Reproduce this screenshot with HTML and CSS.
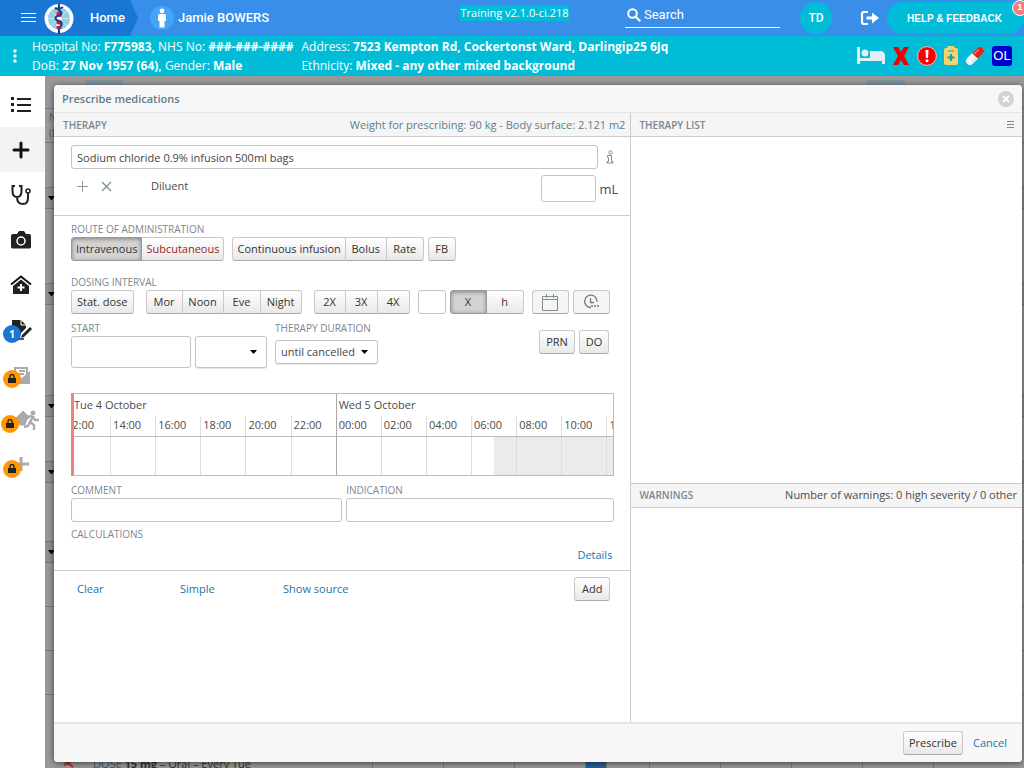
FILE: index.html
```html
<!DOCTYPE html>
<html lang="en">
<head>
    <meta charset="UTF-8">
    <meta name="viewport" content="width=device-width, initial-scale=1.0">
    <title>Prescribe medications</title>
    <link rel="stylesheet" href="styles.css">
</head>
<body>
    <!-- Top bar -->
    <header class="topbar">
        <div class="crumb-home">
            <button class="icon-btn" aria-label="Menu">
                <svg width="15" height="10" viewBox="0 0 15 10" stroke="#fff"><path d="M0 .5h15M0 4.500h15M0 8.500h15"/></svg>
            </button>
            <svg class="logo" width="30" height="32" viewBox="0 0 30 32">
                <circle cx="15" cy="16.500" r="14.500" fill="#fff"/>
                <circle cx="15" cy="16.500" r="11" fill="#8fd0e4"/>
                <path d="M15 5.500v22M4 16.500h22M7 9l16 15M23 9L7 24" stroke="#c4e8f2" fill="none"/>
                <path d="M12.500 10h5v16h-5z" fill="#fff"/>
                <path d="M12.500 10h5v5l-5-1zM12.500 18l5 1v4l-5-1zM12.500 24h5v3h-5z" fill="#d5202f"/>
                <path d="M15 2v6M11 6q4 2 8-1M14 8c5 2 4 5 0 6s-3 4 1 5 3 4 1 6M15 26v6" stroke="#1d3f87" stroke-width="2" fill="none"/>
            </svg>
            <a class="home" href="#">Home</a>
        </div>
        <a class="crumb-patient" href="#">
            <svg width="24" height="24" viewBox="0 0 24 24">
                <circle cx="12" cy="12" r="12" fill="#42a5f5"/>
                <circle cx="12" cy="5" r="2.400" fill="#fff"/>
                <path d="M9.500 8h5q1.500 0 1.500 1.500V15h-1.500v6.500H9.500V15H8V9.500Q8 8 9.500 8z" fill="#fff"/>
            </svg>
            Jamie BOWERS
        </a>
        <div class="version"><span>Training v2.1.0-ci.218</span></div>
        <label class="search">
            <svg width="14" height="14" viewBox="0 0 14 14" fill="none" stroke="#fff" stroke-width="2"><circle cx="5.500" cy="5.500" r="4.300"/><path d="M8.700 8.700l4.600 4.600"/></svg>
            <input type="search" placeholder="Search" aria-label="Search">
        </label>
        <button class="avatar">TD</button>
        <button class="icon-btn logout" aria-label="Log out">
            <svg width="20" height="16" viewBox="0 0 20 16" fill="none" stroke="#fff" stroke-width="2.200"><path d="M8 2H4Q2 2 2 4v8q0 2 2 2h4"/><path d="M6.500 6.500H12V2.500L19 8l-7 5.500v-4H6.500z" fill="#fff" stroke="none"/></svg>
        </button>
        <button class="help">HELP &amp; FEEDBACK<span class="help-count">1</span></button>
    </header>

    <!-- Patient banner -->
    <section class="banner">
        <button class="icon-btn more" aria-label="More">
            <svg width="4" height="14" viewBox="0 0 4 14" fill="#fff"><circle cx="2" cy="2" r="1.700"/><circle cx="2" cy="7" r="1.700"/><circle cx="2" cy="12" r="1.700"/></svg>
        </button>
        <div class="patient">
            <p>Hospital No: <b>F775983,</b> NHS No: <b>###-###-####</b></p>
            <p>DoB: <b>27 Nov 1957 (64),</b> Gender: <b>Male</b></p>
        </div>
        <div class="patient">
            <p>Address: <b>7523 Kempton Rd, Cockertonst Ward, Darlingip25 6Jq</b></p>
            <p>Ethnicity: <b>Mixed - any other mixed background</b></p>
        </div>
        <div class="alerts">
            <svg width="28" height="18" viewBox="0 0 28 18" fill="#e3eff5"><path d="M0 0h3v11h10V4h10q5 0 5 5v8h-3v-3H3v3H0z"/><circle cx="8" cy="6" r="3.500"/></svg>
            <svg width="18" height="20" viewBox="0 0 18 20"><path d="M1 1h5l3 5 3-5h5l-5 9 5 9h-5l-3-5-3 5H1l5-9z" fill="#f00000"/></svg>
            <svg width="20" height="20" viewBox="0 0 20 20"><circle cx="10" cy="10" r="9.400" fill="#f00" stroke="#fbb" /><path d="M8.500 4h3l-.5 8H9z" fill="#fff"/><circle cx="10" cy="14.800" r="1.500" fill="#fff"/></svg>
            <svg width="14" height="20" viewBox="0 0 14 20"><rect y="2" width="14" height="17" rx="2" fill="#fad165"/><rect x="3.500" y="0" width="7" height="4" rx="1" fill="#fad165"/><path d="M4 5h6" stroke="#07a2bd"/><path d="M7 8v7M3.500 11.500h7" stroke="#07a2bd" stroke-width="2"/></svg>
            <svg width="20" height="20" viewBox="0 0 20 20"><g transform="rotate(45 10 10)"><rect x="6" y="-1" width="8" height="22" rx="4" fill="#f3f5f6"/><path d="M6 10V3a4 4 0 0 1 8 0v7z" fill="#e0281f"/><path d="M8 3v6" stroke="#ff9a8e"/><path d="M12.500 11v6" stroke="#ccd4d8"/></g></svg>
            <span class="ol">OL</span>
        </div>
    </section>

    <div class="workspace">
        <!-- Side menu -->
        <nav class="sidebar">
            <a href="#" aria-label="Summary">
                <svg width="20" height="16" viewBox="0 0 20 16" fill="#212121"><path d="M0 0h3v3H0zM0 6h3v3H0zM0 12h3v3H0zM6 1h14v2H6zM6 7h14v2H6zM6 13h14v2H6z"/></svg>
            </a>
            <a href="#" class="active" aria-label="Add">
                <svg width="18" height="18" viewBox="0 0 18 18" stroke="#111" stroke-width="3"><path d="M9 2v14M2 9h14" stroke-linecap="round"/></svg>
            </a>
            <a href="#" aria-label="Observations">
                <svg width="20" height="20" viewBox="0 0 20 20" fill="none" stroke="#212121" stroke-width="2"><path d="M4 1H1.500v5q0 6 4.500 6t4.500-6V1H8M6 12q0 7 6 7 5 0 5-6V8"/><circle cx="17" cy="6" r="2" stroke-width="1.600"/></svg>
            </a>
            <a href="#" aria-label="Photos">
                <svg width="20" height="18" viewBox="0 0 20 18"><path d="M2 3h4l2-3h5l2 3h3q2 0 2 2v11q0 1.500-2 1.500H2Q0 17.500 0 16V5q0-2 2-2z" fill="#212121"/><circle cx="10" cy="10" r="4" fill="none" stroke="#fff" stroke-width="1.500"/></svg>
            </a>
            <a href="#" aria-label="Ward">
                <svg width="22" height="20" viewBox="0 0 22 20"><path d="M1 9.500L11 1.500l10 8" fill="none" stroke="#111" stroke-width="2"/><path d="M3 11l8-6.500 8 6.500v8H3z" fill="#212121"/><path d="M11 9v7M7.500 12.500h7" stroke="#fff" stroke-width="2"/></svg>
            </a>
            <a href="#" aria-label="Notes">
                <svg width="24" height="20" viewBox="0 0 24 20"><path d="M3 0h9l5 5v3l-6 6v4H3z" fill="#212121"/><path d="M12 0v5h5" stroke="#fff" fill="none"/><path d="M13 15l8-8 2 2-8 8-3 1z" fill="#212121"/><path d="M9 19h6" stroke="#212121" stroke-width="1.500"/></svg>
                <span class="badge blue">1</span>
            </a>
            <a href="#" aria-label="Letters, locked">
                <svg width="20" height="19" viewBox="0 0 20 19" fill="none" stroke="#aaa" stroke-width="2"><path d="M4 13V3h12v9M8 6h6M8 9h5"/><path d="M1 9v9h17V8l-8 7z" fill="#aaa"/></svg>
                <span class="badge"><svg width="8" height="10" viewBox="0 0 8 10"><path d="M0 4h8v5H0z" fill="#222"/><path d="M2 4V2.500a2 2 0 0 1 4 0V4" fill="none" stroke="#222" stroke-width="1.300"/></svg></span>
            </a>
            <a href="#" aria-label="Discharge, locked">
                <svg class="wide" width="28" height="20" viewBox="0 0 28 20" fill="none" stroke="#aaa"><path d="M5 8l7-7 5 5-3 9H9z" fill="#aaa"/><circle cx="22" cy="3" r="2" fill="#aaa"/><path d="M15 9l4-3 3 1-3 5 4 3v5M19 12l-2 4-4 1M22 7l2 3h4" stroke-width="2.400"/></svg>
                <span class="badge left"><svg width="8" height="10" viewBox="0 0 8 10"><path d="M0 4h8v5H0z" fill="#222"/><path d="M2 4V2.500a2 2 0 0 1 4 0V4" fill="none" stroke="#222" stroke-width="1.300"/></svg></span>
            </a>
            <a href="#" aria-label="Other, locked">
                <svg width="18" height="18" viewBox="0 0 18 18" stroke="#aaa" stroke-width="3"><path d="M9 1v14M2 8h15"/></svg>
                <span class="badge"><svg width="8" height="10" viewBox="0 0 8 10"><path d="M0 4h8v5H0z" fill="#222"/><path d="M2 4V2.500a2 2 0 0 1 4 0V4" fill="none" stroke="#222" stroke-width="1.300"/></svg></span>
            </a>
        </nav>

        <main class="chart">
            <!-- Dimmed medication chart -->
            <div class="chart-tools"><span></span><span></span></div>
            <div class="chart-head">N<br>(N</div>
            <div class="chart-gap"></div>
            <div class="chart-band"><svg width="7" height="5" viewBox="0 0 7 5"><path d="M0 0h7L3.500 4.500z"/></svg></div>
            <div class="chart-gap tall"></div>
            <div class="chart-band"><svg width="7" height="5" viewBox="0 0 7 5"><path d="M0 0h7L3.500 4.500z"/></svg></div>
            <div class="chart-gap large"></div>
            <div class="chart-band"><svg width="7" height="5" viewBox="0 0 7 5"><path d="M0 0h7L3.500 4.500z"/></svg></div>
            <div class="chart-gap"></div>
            <div class="chart-band"><svg width="7" height="5" viewBox="0 0 7 5"><path d="M0 0h7L3.500 4.500z"/></svg></div>
            <div class="chart-gap medium"></div>
            <div class="chart-band"><svg width="7" height="5" viewBox="0 0 7 5"><path d="M0 0h7L3.500 4.500z"/></svg></div>
            <div class="chart-gap line"></div>
            <div class="chart-gap line"></div>
            <div class="chart-gap line"></div>
            <div class="chart-row">
                <div class="dose">
                    <svg width="16" height="12" viewBox="0 0 16 12" fill="none" stroke="#a33" stroke-width="2"><path d="M1 2l6 6 8-7M3 9l4-2 5 4"/></svg>
                    <p><span>DOSE</span> <b>15 mg</b> – Oral – Every Tue</p>
                </div>
                <i></i><i></i><i></i><i class="given"></i><i class="short"></i><i></i><i></i><i></i><i></i><i></i>
            </div>

            <!-- Prescribe dialog -->
            <div class="dialog" role="dialog" aria-labelledby="dialogTitle">
                <div class="dialog-title">
                    <h1 id="dialogTitle">Prescribe medications</h1>
                    <button class="close" aria-label="Close">
                        <svg width="16" height="16" viewBox="0 0 16 16"><circle cx="8" cy="8" r="8" fill="#d3d3d3"/><path d="M5 5l6 6M11 5l-6 6" stroke="#fff" stroke-width="1.800"/></svg>
                    </button>
                </div>
                <div class="dialog-body">
                    <div class="therapy">
                        <div class="panel-head">
                            <h2>THERAPY</h2>
                            <span>Weight for prescribing: 90 kg - Body surface: 2.121 m2</span>
                        </div>
                        <form>
                            <div class="medicine">
                                <div class="row medicine-name">
                                    <input type="text" value="Sodium chloride 0.9% infusion 500ml bags" aria-label="Medication">
                                    <button type="button" class="plain" aria-label="Information">
                                        <svg width="8" height="14" viewBox="0 0 8 14" fill="none" stroke="#7d8f97"><circle cx="4.500" cy="2.500" r="1.700"/><path d="M1.500 5.500h4v6h1.500v1.500H1v-1.500h1.500v-4h-1z"/></svg>
                                    </button>
                                </div>
                                <div class="row diluent">
                                    <button type="button" class="plain" aria-label="Add ingredient"><svg width="11" height="11" viewBox="0 0 11 11" stroke="#8c9ba1"><path d="M5.500 0v11M0 5.500h11"/></svg></button>
                                    <button type="button" class="plain" aria-label="Remove ingredient"><svg width="11" height="11" viewBox="0 0 11 11" stroke="#7d8f97" stroke-width="1.300"><path d="M1 1l9 9M10 1l-9 9"/></svg></button>
                                    <label for="volume">Diluent</label>
                                    <input type="text" id="volume">
                                    <span class="unit">mL</span>
                                </div>
                            </div>

                            <div class="details">
                                <div class="caption">ROUTE OF ADMINISTRATION</div>
                                <div class="row route">
                                    <div class="group"><button type="button" class="on">Intravenous</button><button type="button" class="red">Subcutaneous</button></div>
                                    <div class="group gap-8"><button type="button">Continuous infusion</button><button type="button" class="w-41">Bolus</button><button type="button" class="w-37">Rate</button></div>
                                    <div class="group gap-4"><button type="button" class="w-28">FB</button></div>
                                </div>

                                <div class="caption interval">DOSING INTERVAL</div>
                                <div class="row">
                                    <div class="group"><button type="button">Stat. dose</button></div>
                                    <div class="group gap-12"><button type="button" class="w-37">Mor</button><button type="button" class="w-41">Noon</button><button type="button" class="w-37">Eve</button><button type="button" class="w-41">Night</button></div>
                                    <div class="group gap-12"><button type="button" class="w-32">2X</button><button type="button" class="w-32">3X</button><button type="button" class="w-32">4X</button></div>
                                    <input type="text" class="times w-28 gap-8" aria-label="Times">
                                    <div class="group gap-4"><button type="button" class="on w-37">X</button><button type="button" class="w-37">h</button></div>
                                    <button type="button" class="tool gap-8" aria-label="Calendar">
                                        <svg width="16" height="17" viewBox="0 0 16 17" fill="none" stroke="#7d8f97"><path d="M.5 2.500h15v14H.5zM.5 5.500h15M4.500 0v4M11.500 0v4"/></svg>
                                    </button>
                                    <button type="button" class="tool gap-4" aria-label="Time">
                                        <svg width="16" height="16" viewBox="0 0 16 16" fill="none" stroke="#777" stroke-width="1.300"><path d="M8 13.500A6.200 6.200 0 1 1 14 8M7.500 4v4.500H11"/><path d="M8 12h2M11 12h2M14 12h2" stroke-width="1.600"/></svg>
                                    </button>
                                </div>

                                <div class="row timing">
                                    <div>
                                        <label class="caption" for="startDate">START</label>
                                        <div class="row start">
                                            <input type="text" id="startDate">
                                            <select aria-label="Start time"><option></option></select>
                                        </div>
                                    </div>
                                    <div class="duration">
                                        <label class="caption" for="duration">THERAPY DURATION</label>
                                        <select id="duration"><option>until cancelled</option></select>
                                    </div>
                                    <div class="flags">
                                        <button type="button">PRN</button>
                                        <button type="button">DO</button>
                                    </div>
                                </div>

                                <div class="timeline">
                                    <div class="days"><span>Tue 4 October</span><span>Wed 5 October</span></div>
                                    <div class="hours"><span class="cut">12:00</span><span>14:00</span><span>16:00</span><span>18:00</span><span>20:00</span><span>22:00</span><span>00:00</span><span>02:00</span><span>04:00</span><span>06:00</span><span>08:00</span><span>10:00</span><span>12:00</span></div>
                                    <div class="slots"><i></i><i></i><i></i><i></i><i></i><i></i><i></i><i></i><i></i><i class="half"></i><i class="shade"></i><i class="shade"></i><i class="shade"></i></div>
                                </div>

                                <div class="notes">
                                    <div><label class="caption" for="comment">COMMENT</label><input type="text" id="comment"></div>
                                    <div><label class="caption" for="indication">INDICATION</label><input type="text" id="indication"></div>
                                </div>
                                <div class="caption">CALCULATIONS</div>
                                <div class="more-link"><a href="#">Details</a></div>
                            </div>

                            <div class="row actions">
                                <a href="#">Clear</a>
                                <a href="#">Simple</a>
                                <a href="#">Show source</a>
                                <button type="button">Add</button>
                            </div>
                        </form>
                    </div>

                    <div class="side">
                        <div class="side-panel list">
                            <div class="panel-head">
                                <h2>THERAPY LIST</h2>
                                <button class="plain" aria-label="List options"><svg width="7" height="8" viewBox="0 0 7 8" stroke="#888"><path d="M0 .5h7M0 3.500h7M0 6.500h7"/></svg></button>
                            </div>
                        </div>
                        <div class="side-panel warnings">
                            <div class="panel-head">
                                <h2>WARNINGS</h2>
                                <span>Number of warnings: 0 high severity / 0 other</span>
                            </div>
                        </div>
                    </div>
                </div>
                <div class="dialog-foot">
                    <button>Prescribe</button>
                    <a href="#">Cancel</a>
                </div>
            </div>
        </main>
    </div>
</body>
</html>
```

FILE: styles.css
```css
* { box-sizing: border-box; }
body { margin: 0; height: 100vh; overflow: hidden; display: flex; flex-direction: column; font-family: "Open Sans", "Noto Sans", sans-serif; font-size: 11px; line-height: 16px; color: #444; }
h1, h2, p { margin: 0; }
a { color: #1b74a8; text-decoration: none; }
button, input, select { font: inherit; color: #333; margin: 0; }
button { cursor: pointer; }
svg { display: block; flex: none; }
.icon-btn, .plain { background: none; border: 0; padding: 0; flex: none; }
.row { display: flex; align-items: center; }

/* Top bar */
.topbar { flex: none; display: flex; align-items: center; height: 36px; background: #388ee8; color: white; font-family: Roboto, sans-serif; }
.topbar a { color: white; font-size: 13px; font-weight: 500; }
.crumb-home { display: flex; align-items: center; height: 100%; width: 138px; padding-left: 21px; background: #1976d2; clip-path: polygon(0 0, 130px 0, 100% 50%, 130px 100%, 0 100%); }
.logo { margin-left: 8px; }
.home { margin-left: 16px; }
.crumb-patient { display: flex; align-items: center; gap: 4px; margin-left: 12px; width: 200px; }
.version { flex: 1; text-align: center; align-self: flex-start; padding: 5px 0 0 54px; font-family: "Open Sans", sans-serif; font-size: 11px; white-space: nowrap; }
.version span { background: #00bcd9; display: inline-block; }
.search { display: flex; align-items: center; gap: 3px; width: 155px; height: 24px; margin: 0 20px 4px 0; padding: 0 2px 2px; border-bottom: 1px solid white; }
.search input { width: 100%; border: 0; padding: 0; background: none; color: white; font-size: 13px; outline: none; }
.search input::placeholder { color: white; }
.avatar { width: 32px; height: 32px; border: 0; padding: 0; border-radius: 50%; background: #00bcd9; color: white; font-size: 12px; font-weight: 500; }
.logout { margin: 0 7px 0 28px; }
.help { position: relative; width: 137px; height: 32px; border: 0; padding: 0 2px 0 0; border-radius: 16px; background: #00bcd9; color: white; font: bold 10px "Liberation Sans", sans-serif; }
.help-count { position: absolute; top: -2px; right: -4px; width: 16px; height: 16px; border: 1px solid white; border-radius: 50%; background: #f08080; font-size: 9px; line-height: 13px; }

/* Patient banner */
.banner { flex: none; display: flex; align-items: center; height: 40px; padding: 0 12px 0 13px; background: #00bcd7; color: white; font-size: 12px; line-height: 19px; white-space: nowrap; }
.more { margin-right: 15px; }
.patient { margin-right: 8px; }
.banner b { font-weight: 700; }
.alerts { display: flex; align-items: center; gap: 7px; margin-left: auto; }
.ol { width: 20px; height: 20px; border-radius: 3px; background: #0000cd; text-align: center; font: 13px/20px "Liberation Sans", sans-serif; }

/* Side menu */
.workspace { flex: 1; min-height: 0; display: flex; }
.sidebar { flex: none; width: 45px; padding-top: 6px; background: white; }
.sidebar a { position: relative; display: flex; align-items: center; justify-content: center; height: 45px; padding-right: 3px; }
.sidebar .active { background: #f3f3f3; }
.badge { position: absolute; left: 3px; top: 18px; width: 18px; height: 18px; border-radius: 50%; display: flex; align-items: center; justify-content: center; background: #ff9800; }
.badge.blue { background: #1976d2; color: white; font-weight: bold; font-size: 10px; }
.badge.left { left: 1px; }
.sidebar .wide { margin-left: 8px; }

/* Dimmed medication chart */
.chart { position: relative; flex: 1; display: flex; flex-direction: column; overflow: hidden; background: #999; color: #555; }
.chart-tools { flex: 0 0 32px; display: flex; justify-content: space-between; padding: 4px 119px 4px 40px; }
.chart-tools span { width: 38px; background: #7f929d; }
.chart-head { flex: 0 0 35px; padding-left: 4px; border: solid #777; border-width: 1px 0; font-size: 10px; }
.chart-band { flex: 0 0 22px; display: flex; align-items: center; padding-left: 3px; border: solid #777; border-width: 1px 0; background: #909090; }
.chart-gap { flex: 0 0 44px; }
.chart-gap.medium { flex-basis: 58px; }
.chart-gap.tall { flex-basis: 74px; }
.chart-gap.large { flex-basis: 90px; }
.chart-gap.line { border-bottom: 1px solid #777; }
.chart-row { display: flex; margin-top: auto; height: 12px; overflow: hidden; }
.dose { display: flex; flex: none; width: 327px; padding-left: 16px; gap: 16px; color: #333; }
.dose span { color: #3d5a80; }
.chart-row i { flex: 0 0 71px; border-left: 1px solid #777; }
.chart-row .given { flex-basis: 21px; background: #2a5f93; }
.chart-row .short { flex-basis: 43px; }

/* Dialog */
.dialog { position: absolute; top: 9px; right: 2px; bottom: 6px; left: 9px; display: flex; flex-direction: column; border-radius: 4px; background: white; box-shadow: 0 1px 6px rgba(0, 0, 0, 0.6); color: #4b4b4b; }
.dialog-title { flex: none; display: flex; align-items: center; justify-content: space-between; height: 28px; padding: 0 8px; border-bottom: 1px solid #e4e4e4; border-radius: 4px 4px 0 0; background: #f7f7f7; }
.dialog-title h1 { font-size: 11px; font-weight: 600; color: #607d8b; }
.close { border: 0; padding: 0; background: none; }
.dialog-body { flex: 1; min-height: 0; display: flex; }
.therapy { flex: 577; min-width: 0; }
.side { flex: 391; min-width: 0; display: flex; flex-direction: column; border-left: 1px solid #ccc; }
.side-panel.list { flex: 371; }
.side-panel.warnings { flex: 239; border-top: 1px solid #ccc; }
.panel-head { display: flex; align-items: center; justify-content: space-between; height: 24px; padding: 0 5px 0 9px; border-bottom: 1px solid #ccc; background: #f5f5f5; white-space: nowrap; }
.side .panel-head { padding-left: 8px; }
.list .panel-head { padding-right: 8px; }
.panel-head h2 { font-size: 10px; font-weight: 600; color: #7c8792; }
.therapy .panel-head span { color: #607d8b; }
.dialog-foot { flex: none; display: flex; align-items: center; justify-content: flex-end; gap: 10px; height: 40px; padding-right: 15px; border-top: 2px solid #e4e4e4; border-radius: 0 0 4px 4px; background: #f7f7f7; }

/* Controls */
.dialog input, .dialog select { height: 24px; padding: 0 5px; border: 1px solid #c4c4c4; border-radius: 3px; background-color: white; color: #444; }
.dialog select { appearance: none; padding-right: 20px; background-image: url("data:image/svg+xml,%3Csvg xmlns='http://www.w3.org/2000/svg' width='7' height='4'%3E%3Cpath d='M0 0h7L3.500 4z'/%3E%3C/svg%3E"); background-repeat: no-repeat; background-position: right 9px center; box-shadow: 0 1px 1px rgba(0, 0, 0, 0.1); }
.group { display: flex; }
.group button, .tool, .flags button, .actions button, .dialog-foot button { height: 24px; padding: 0 5px; border: 1px solid #c9c9c9; border-bottom-color: #aaa; border-radius: 3px; background: linear-gradient(#fff, #e8e8e8); color: #333; white-space: nowrap; }
.group button { border-radius: 0; }
.group button + button { border-left-width: 0; }
.group button:first-child { border-radius: 3px 0 0 3px; }
.group button:last-child { border-radius: 0 3px 3px 0; }
.group button:only-child { border-radius: 3px; }
.group button.on { border-color: #999; background: #d3d3d3; box-shadow: inset 0 1px 4px rgba(0, 0, 0, 0.4); }
.group button.red { color: #9b1c28; }
.route .group button { padding: 0 4px; }
.gap-4 { margin-left: 4px; }
.gap-8 { margin-left: 8px; }
.gap-12 { margin-left: 12px; }
.group .w-32, .group .w-37, .group .w-41, .route .group .w-28, .route .group .w-37, .route .group .w-41 { padding: 0; }
.w-28 { width: 28px; }
.w-32 { width: 32px; }
.w-37 { width: 37px; }
.w-41 { width: 41px; }
.tool { display: flex; align-items: center; justify-content: center; width: 37px; background: #f5f5f5; }
.caption { display: block; font-size: 10px; line-height: 16px; color: #7c8792; white-space: nowrap; }

/* Therapy form */
.medicine { padding: 8px 12px 13px 17px; border-bottom: 1px solid #ccc; }
.medicine-name input { flex: 1; }
.medicine-name .plain { margin: 0 4px 0 8px; }
.diluent { margin-top: 6px; align-items: flex-start; }
.diluent .plain { margin: 6px 7px 0 6px; }
.diluent label { margin: 3px 0 0 32px; }
.diluent input { width: 55px; height: 27px; margin-left: auto; }
.unit { margin: 6px 0 0 4px; font-size: 13px; }
.details { padding: 5px 16px 7px 17px; border-bottom: 1px solid #ccc; }
.interval { margin-top: 13px; }
.timing { align-items: flex-start; margin-top: 6px; }
.start { gap: 4px; }
.start input { width: 120px; height: 32px; }
.start select { width: 72px; height: 32px; }
.duration { margin-left: 8px; }
.duration select { width: 103px; margin-top: 4px; }
.flags { display: flex; gap: 4px; margin: 10px 5px 0 auto; }
.flags button { padding: 0 6px; }
.timeline { margin: 25px 0 6px; height: 83px; display: flex; flex-direction: column; border: 1px solid #bbb; border-left: 3px solid #ec8377; overflow: hidden; white-space: nowrap; }
.days, .hours, .slots { display: grid; grid-template-columns: minmax(0, 36fr) repeat(11, minmax(0, 45fr)) minmax(0, 7fr); }
.days { line-height: 22px; }
.days span { grid-column: 7 / -1; padding-left: 2px; border-left: 1px solid #aaa; }
.days span:first-child { grid-column: 1 / 7; padding-left: 0; border-left: 0; }
.hours { height: 21px; line-height: 18px; border-bottom: 1px solid #bbb; }
.hours span { padding-left: 2px; overflow: hidden; border-left: 1px solid #ddd; }
.hours .cut { display: flex; justify-content: flex-end; padding: 0 16px 0 0; }
.slots { flex: 1; }
.slots i { border-left: 1px solid #ddd; }
.hours span:first-child, .slots i:first-child { border-left: 0; }
.hours span:nth-child(7), .slots i:nth-child(7) { border-color: #aaa; }
.slots .shade { background: #ebebeb; }
.slots .half { background: linear-gradient(90deg, #fff 50%, #ebebeb 50%); }
.notes { display: grid; grid-template-columns: 271fr 268fr; gap: 4px; margin-bottom: 4px; }
.notes input { width: 100%; }
.more-link { margin-top: 5px; padding-right: 2px; text-align: right; }
.actions { padding: 6px 20px 0 23px; }
.actions a:nth-child(-n+2) { flex: 0 0 103px; }
.actions button { margin-left: auto; padding: 0 7px; }
```
